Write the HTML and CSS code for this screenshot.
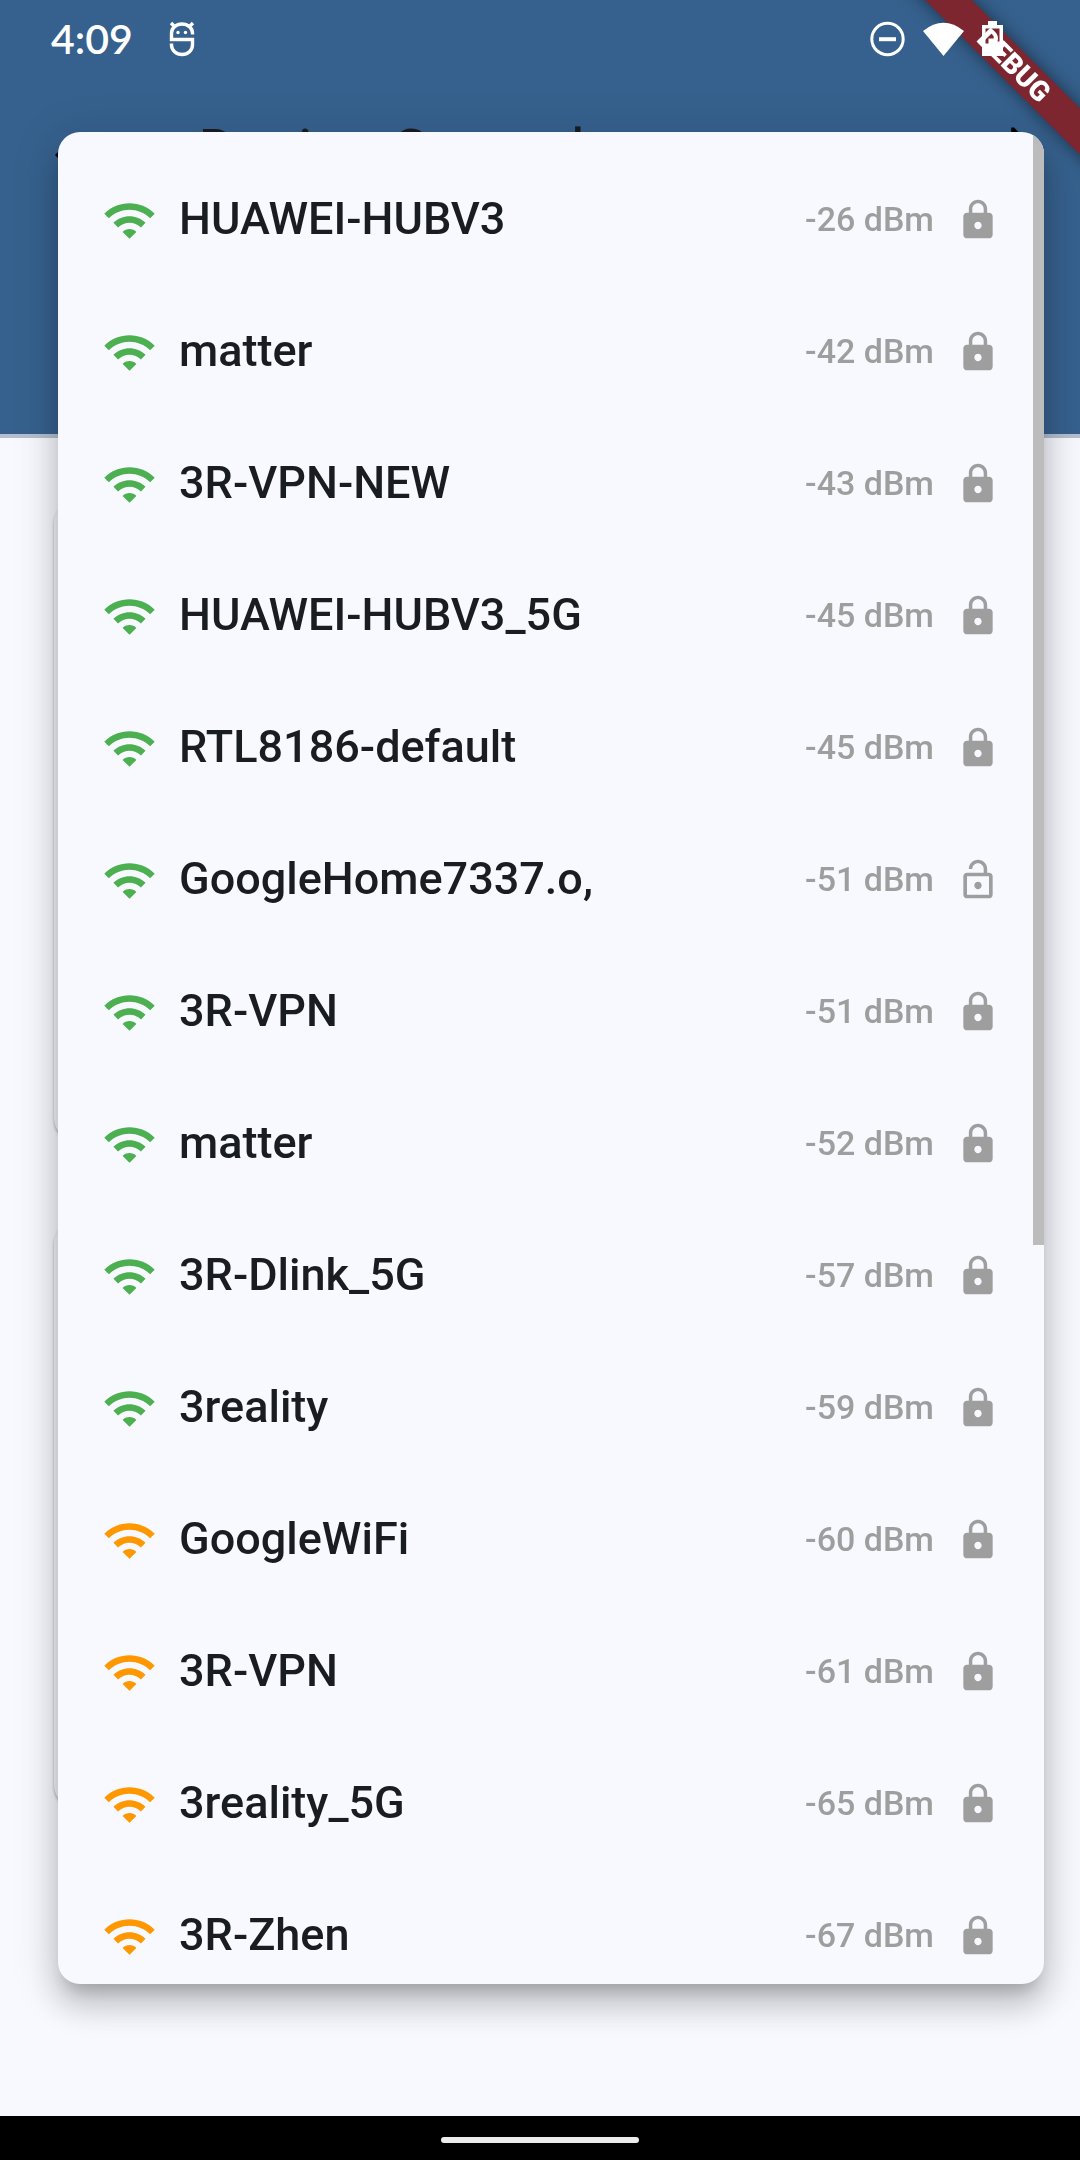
FILE: index.html
```
<!DOCTYPE html>
<html lang="en">
<head>
<meta charset="utf-8">
<meta name="viewport" content="width=device-width, initial-scale=1">
<title>Device Control</title>
<link rel="stylesheet" href="styles.css">
</head>
<body>
<svg class="sprite" aria-hidden="true">
  <symbol id="wifi" viewBox="0 0 24 24"><path d="M1 9l2 2c4.97-4.97 13.03-4.97 18 0l2-2C16.93 2.93 7.08 2.93 1 9zm8 8l3 3 3-3c-1.65-1.66-4.34-1.66-6 0zm-4-4l2 2c2.76-2.76 7.24-2.76 10 0l2-2C15.14 9.14 8.87 9.14 5 13z"/></symbol>
  <symbol id="lock" viewBox="0 0 24 24"><path d="M18 8h-1V6c0-2.76-2.24-5-5-5S7 3.240 7 6v2H6c-1.100 0-2 .9-2 2v10c0 1.100.9 2 2 2h12c1.100 0 2-.9 2-2V10c0-1.100-.9-2-2-2zm-6 9c-1.100 0-2-.9-2-2s.9-2 2-2 2 .9 2 2-.9 2-2 2zm3.100-9H8.900V6c0-1.710 1.390-3.100 3.100-3.100s3.100 1.390 3.100 3.100v2z"/></symbol>
  <symbol id="lock-open" viewBox="0 0 24 24"><path d="M12 17c1.100 0 2-.9 2-2s-.9-2-2-2-2 .9-2 2 .9 2 2 2zm6-9h-1V6c0-2.760-2.240-5-5-5S7 3.240 7 6h1.900c0-1.710 1.390-3.100 3.100-3.100s3.100 1.390 3.100 3.100v2H6c-1.100 0-2 .9-2 2v10c0 1.100.9 2 2 2h12c1.100 0 2-.9 2-2V10c0-1.100-.9-2-2-2zm0 12H6V10h12v10z"/></symbol>
</svg>

<div class="screen">
  <header class="app-header">
    <div class="status-bar">
      <span class="clock">4:09</span>
      <svg class="debug-icon" viewBox="0 0 26 36" fill="none" stroke="#fff" stroke-width="3.400"><path d="M23.500 13.500V12a10.500 9 0 0 0-21 0v6.500h21V24a10.500 9.500 0 0 1-21 0v-1.500M2 2l4 4M24 2l-4 4"/><circle cx="9" cy="11.500" r="1.700" fill="#fff" stroke="none"/><circle cx="16.500" cy="11.500" r="1.700" fill="#fff" stroke="none"/></svg>
      <span class="status-icons">
        <svg width="35" height="36" viewBox="0 0 35 36"><circle cx="17.500" cy="18" r="15.700" fill="none" stroke="#fff" stroke-width="3"/><path d="M9 16.200h17v4H9z" fill="#fff"/></svg>
        <svg width="41" height="36" viewBox="0 0 41 36"><path d="M0 10Q20.500-6.500 41 10L20.500 35z" fill="#fff"/></svg>
        <svg width="21" height="36" viewBox="0 0 21 36"><path fill="#fff" fill-rule="evenodd" d="M6 0h9v4h6v31H0V4h6zM3.500 7.500v15h3v-5h8v3h3v-13z"/></svg>
      </span>
    </div>
    <div class="toolbar">
      <button class="icon-button" aria-label="Back"><svg viewBox="0 0 24 24"><path d="M20 11H7.830l5.590-5.590L12 4l-8 8 8 8 1.410-1.410L7.830 13H20v-2z"/></svg></button>
      <h1>Device Control</h1>
      <button class="icon-button" aria-label="Bluetooth"><svg viewBox="0 0 24 24"><path d="M17.710 7.710L12 2h-1v7.590L6.410 5 5 6.410 10.590 12 5 17.590 6.410 19 11 14.410V22h1l5.710-5.710-4.300-4.290 4.300-4.290zM13 5.830l1.880 1.880L13 9.590V5.830zm1.880 10.460L13 18.170v-3.760l1.880 1.880z"/></svg></button>
    </div>
  </header>
  <main class="cards">
    <section class="card card-tall"></section>
    <section class="card"></section>
  </main>
  <footer class="nav-bar"><span class="nav-handle"></span></footer>
</div>

<div class="overlay">
  <div class="menu">
    <ul class="networks">
      <li><button class="network"><svg class="signal strong"><use href="#wifi"/></svg><span class="name">HUAWEI-HUBV3</span><span class="level">-26 dBm</span><svg class="security"><use href="#lock"/></svg></button></li>
      <li><button class="network"><svg class="signal strong"><use href="#wifi"/></svg><span class="name">matter</span><span class="level">-42 dBm</span><svg class="security"><use href="#lock"/></svg></button></li>
      <li><button class="network"><svg class="signal strong"><use href="#wifi"/></svg><span class="name">3R-VPN-NEW</span><span class="level">-43 dBm</span><svg class="security"><use href="#lock"/></svg></button></li>
      <li><button class="network"><svg class="signal strong"><use href="#wifi"/></svg><span class="name">HUAWEI-HUBV3_5G</span><span class="level">-45 dBm</span><svg class="security"><use href="#lock"/></svg></button></li>
      <li><button class="network"><svg class="signal strong"><use href="#wifi"/></svg><span class="name">RTL8186-default</span><span class="level">-45 dBm</span><svg class="security"><use href="#lock"/></svg></button></li>
      <li><button class="network"><svg class="signal strong"><use href="#wifi"/></svg><span class="name">GoogleHome7337.o,</span><span class="level">-51 dBm</span><svg class="security"><use href="#lock-open"/></svg></button></li>
      <li><button class="network"><svg class="signal strong"><use href="#wifi"/></svg><span class="name">3R-VPN</span><span class="level">-51 dBm</span><svg class="security"><use href="#lock"/></svg></button></li>
      <li><button class="network"><svg class="signal strong"><use href="#wifi"/></svg><span class="name">matter</span><span class="level">-52 dBm</span><svg class="security"><use href="#lock"/></svg></button></li>
      <li><button class="network"><svg class="signal strong"><use href="#wifi"/></svg><span class="name">3R-Dlink_5G</span><span class="level">-57 dBm</span><svg class="security"><use href="#lock"/></svg></button></li>
      <li><button class="network"><svg class="signal strong"><use href="#wifi"/></svg><span class="name">3reality</span><span class="level">-59 dBm</span><svg class="security"><use href="#lock"/></svg></button></li>
      <li><button class="network"><svg class="signal fair"><use href="#wifi"/></svg><span class="name">GoogleWiFi</span><span class="level">-60 dBm</span><svg class="security"><use href="#lock"/></svg></button></li>
      <li><button class="network"><svg class="signal fair"><use href="#wifi"/></svg><span class="name">3R-VPN</span><span class="level">-61 dBm</span><svg class="security"><use href="#lock"/></svg></button></li>
      <li><button class="network"><svg class="signal fair"><use href="#wifi"/></svg><span class="name">3reality_5G</span><span class="level">-65 dBm</span><svg class="security"><use href="#lock"/></svg></button></li>
      <li><button class="network"><svg class="signal fair"><use href="#wifi"/></svg><span class="name">3R-Zhen</span><span class="level">-67 dBm</span><svg class="security"><use href="#lock"/></svg></button></li>
    </ul>
    <span class="scroll-thumb"></span>
  </div>
</div>

<div class="debug-corner"><span class="debug-ribbon">DEBUG</span></div>
</body>
</html>
```
FILE: styles.css
```
* { box-sizing: border-box; }

body {
  margin: 0;
  font-family: Roboto, "Liberation Sans", sans-serif;
  color: #191c20;
  background: #f8f9ff;
}

button {
  padding: 0;
  border: 0;
  background: none;
  color: inherit;
  font: inherit;
  text-align: left;
}

svg { display: block; flex: none; }
.sprite { position: absolute; width: 0; height: 0; }

.screen {
  display: flex;
  flex-direction: column;
  min-height: 100vh;
}

/* Header */
.app-header {
  min-height: 438px;
  background: #36618e;
  border-bottom: 4px solid #b5bfcf;
}

.status-bar {
  display: flex;
  align-items: center;
  height: 78px;
  padding: 0 77px 0 51px;
}

.clock {
  font: 600 41px/48px Lato, sans-serif;
  color: #fff;
}

.debug-icon { width: 26px; height: 36px; margin-left: 36px; }

.status-icons {
  position: relative;
  z-index: 2;
  display: flex;
  gap: 18px;
  margin-left: auto;
}

.toolbar {
  display: flex;
  align-items: center;
  height: 154px;
  padding: 0 33px 0 44px;
}

.icon-button svg { width: 66px; height: 66px; }

h1 {
  flex: 1;
  margin: 0;
  padding: 0 0 8px 88px;
  font-size: 60px;
  line-height: 76px;
  font-weight: 400;
}

/* Page behind the menu */
.cards {
  flex: 1;
  display: flex;
  flex-direction: column;
  gap: 82px;
  padding: 63px 54px 309px;
}

.card {
  flex: 11;
  border-radius: 22px;
  background: #f4f4fa;
  box-shadow: 0 2px 3px #0000004d;
}

.card-tall { flex-grow: 12; }

.nav-bar {
  display: flex;
  align-items: center;
  justify-content: center;
  height: 44px;
  padding-top: 4px;
  background: #000;
}

.nav-handle {
  width: 198px;
  height: 6px;
  border-radius: 3px;
  background: #ececec;
}

/* Network menu */
.overlay {
  position: fixed;
  inset: 0;
  display: flex;
  padding: 132px 36px 176px 58px;
}

.menu {
  position: relative;
  flex: 1;
  display: flex;
  overflow: hidden;
  border-radius: 22px;
  background: #f8f9ff;
  box-shadow: 0 14px 17px -8px #00000033, 0 22px 32px 3px #00000024, 0 8px 45px 6px #0000001f;
}

.networks {
  flex: 1;
  margin: 0;
  padding: 22px 0;
  list-style: none;
  overflow-y: auto;
  scrollbar-width: none;
}

.network {
  display: flex;
  align-items: center;
  gap: 22px;
  width: 100%;
  height: 132px;
  padding: 0 44px;
  font-weight: 500;
}

.signal { width: 55px; height: 55px; }
.strong { fill: #4caf50; }
.fair { fill: #ff9800; }

.name {
  flex: 1;
  padding-bottom: 2px;
  font-size: 45px;
  line-height: 66px;
}

.level {
  padding-bottom: 2px;
  font-size: 34px;
  line-height: 48px;
  color: #9e9e9e;
}

.security { width: 44px; height: 44px; fill: #9e9e9e; }

.scroll-thumb {
  position: absolute;
  top: 0;
  right: 0;
  width: 11px;
  height: calc(60% + 2px);
  background: #bcbcbc;
}

/* Corner ribbon */
.debug-corner {
  position: fixed;
  top: 0;
  right: 0;
  z-index: 1;
  width: 220px;
  height: 220px;
  overflow: hidden;
  pointer-events: none;
}

.debug-ribbon {
  position: absolute;
  top: 49px;
  left: 4px;
  width: 300px;
  transform: rotate(45deg);
  background: #7e2630;
  box-shadow: 0 0 18px #00000080;
  color: #fff;
  font-size: 28px;
  line-height: 33px;
  font-weight: 900;
  text-align: center;
}
```
